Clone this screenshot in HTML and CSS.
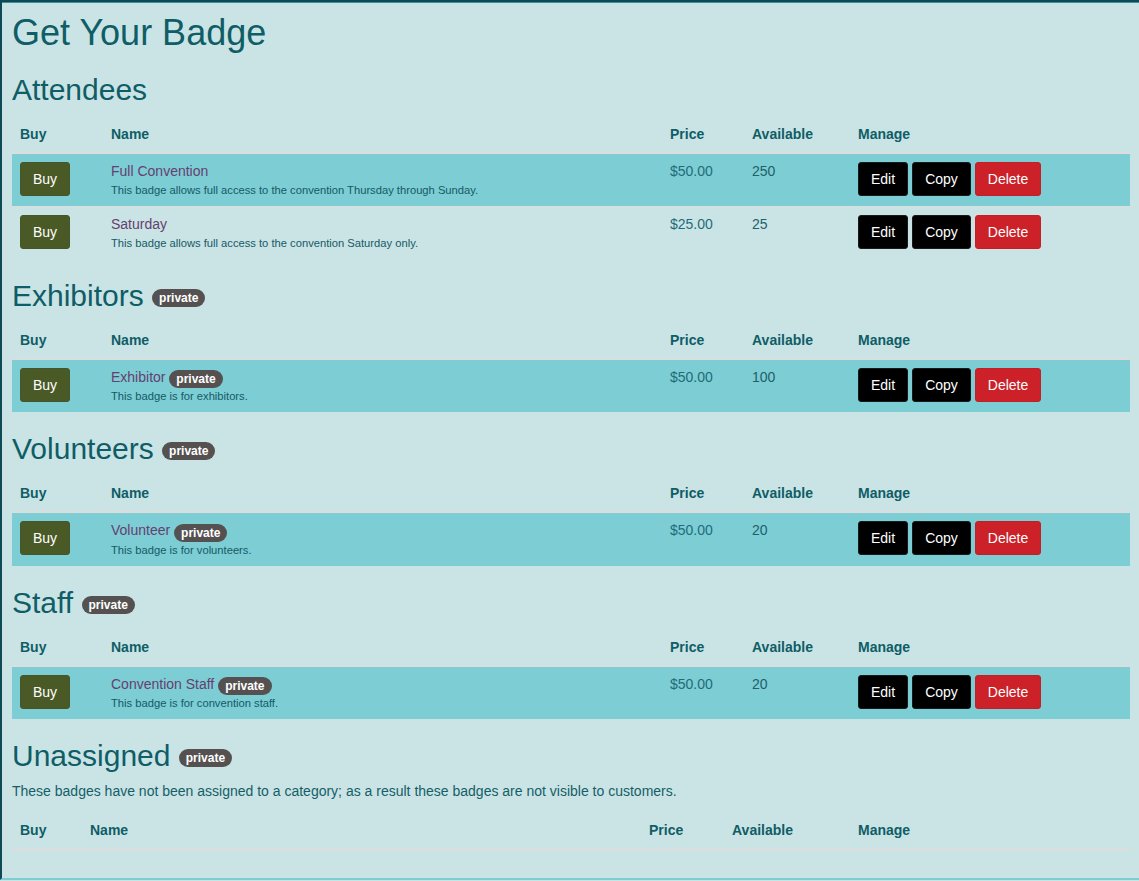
FILE: index.html
```html
<!DOCTYPE html>
<html lang="en">
<head>
    <meta charset="UTF-8">
    <title>Get Your Badge</title>
    <link rel="stylesheet" href="styles.css">
</head>
<body>
<div class="page">
    <h1>Get Your Badge</h1>

    <h2>Attendees</h2>
    <table class="badges">
        <colgroup>
            <col class="c-buy"><col class="c-name"><col class="c-price"><col class="c-avail"><col class="c-manage">
        </colgroup>
        <thead>
            <tr><th>Buy</th><th>Name</th><th>Price</th><th>Available</th><th>Manage</th></tr>
        </thead>
        <tbody>
            <tr class="odd">
                <td><button class="btn btn-buy">Buy</button></td>
                <td>
                    <span class="badge-name">Full Convention</span>
                    <div class="desc">This badge allows full access to the convention Thursday through Sunday.</div>
                </td>
                <td class="price">$50.00</td>
                <td class="avail">250</td>
                <td><div class="manage"><button class="btn btn-dark">Edit</button><button class="btn btn-dark">Copy</button><button class="btn btn-danger">Delete</button></div></td>
            </tr>
            <tr>
                <td><button class="btn btn-buy">Buy</button></td>
                <td>
                    <span class="badge-name">Saturday</span>
                    <div class="desc">This badge allows full access to the convention Saturday only.</div>
                </td>
                <td class="price">$25.00</td>
                <td class="avail">25</td>
                <td><div class="manage"><button class="btn btn-dark">Edit</button><button class="btn btn-dark">Copy</button><button class="btn btn-danger">Delete</button></div></td>
            </tr>
        </tbody>
    </table>

    <h2>Exhibitors <span class="pill">private</span></h2>
    <table class="badges">
        <colgroup>
            <col class="c-buy"><col class="c-name"><col class="c-price"><col class="c-avail"><col class="c-manage">
        </colgroup>
        <thead>
            <tr><th>Buy</th><th>Name</th><th>Price</th><th>Available</th><th>Manage</th></tr>
        </thead>
        <tbody>
            <tr class="odd">
                <td><button class="btn btn-buy">Buy</button></td>
                <td>
                    <span class="badge-name">Exhibitor</span> <span class="pill">private</span>
                    <div class="desc">This badge is for exhibitors.</div>
                </td>
                <td class="price">$50.00</td>
                <td class="avail">100</td>
                <td><div class="manage"><button class="btn btn-dark">Edit</button><button class="btn btn-dark">Copy</button><button class="btn btn-danger">Delete</button></div></td>
            </tr>
        </tbody>
    </table>

    <h2>Volunteers <span class="pill">private</span></h2>
    <table class="badges">
        <colgroup>
            <col class="c-buy"><col class="c-name"><col class="c-price"><col class="c-avail"><col class="c-manage">
        </colgroup>
        <thead>
            <tr><th>Buy</th><th>Name</th><th>Price</th><th>Available</th><th>Manage</th></tr>
        </thead>
        <tbody>
            <tr class="odd">
                <td><button class="btn btn-buy">Buy</button></td>
                <td>
                    <span class="badge-name">Volunteer</span> <span class="pill">private</span>
                    <div class="desc">This badge is for volunteers.</div>
                </td>
                <td class="price">$50.00</td>
                <td class="avail">20</td>
                <td><div class="manage"><button class="btn btn-dark">Edit</button><button class="btn btn-dark">Copy</button><button class="btn btn-danger">Delete</button></div></td>
            </tr>
        </tbody>
    </table>

    <h2>Staff <span class="pill">private</span></h2>
    <table class="badges">
        <colgroup>
            <col class="c-buy"><col class="c-name"><col class="c-price"><col class="c-avail"><col class="c-manage">
        </colgroup>
        <thead>
            <tr><th>Buy</th><th>Name</th><th>Price</th><th>Available</th><th>Manage</th></tr>
        </thead>
        <tbody>
            <tr class="odd">
                <td><button class="btn btn-buy">Buy</button></td>
                <td>
                    <span class="badge-name">Convention Staff</span> <span class="pill">private</span>
                    <div class="desc">This badge is for convention staff.</div>
                </td>
                <td class="price">$50.00</td>
                <td class="avail">20</td>
                <td><div class="manage"><button class="btn btn-dark">Edit</button><button class="btn btn-dark">Copy</button><button class="btn btn-danger">Delete</button></div></td>
            </tr>
        </tbody>
    </table>

    <h2>Unassigned <span class="pill">private</span></h2>
    <p class="intro">These badges have not been assigned to a category; as a result these badges are not visible to customers.</p>
    <table class="badges empty">
        <colgroup>
            <col class="c-buy"><col class="c-name"><col class="c-price"><col class="c-avail"><col class="c-manage">
        </colgroup>
        <thead>
            <tr><th>Buy</th><th>Name</th><th>Price</th><th>Available</th><th>Manage</th></tr>
        </thead>
        <tbody></tbody>
    </table>
</div>
</body>
</html>
```

FILE: styles.css
```css
html, body {
    margin: 0;
    padding: 0;
    font-family: "Liberation Sans", Arial, sans-serif;
    font-size: 14px;
    line-height: 1.42857;
    background-color: #cae4e5;
    color: #155e68;
}
.page {
    border-top: 2px solid #0e4a55;
    border-left: 2px solid #0e4a55;
    border-bottom: 2px solid #7ccdd4;
    box-shadow: inset 0 1px 0 #3b8f99;
    padding: 1px 9px 8px 10px;
}
h1 {
    font-size: 36px;
    font-weight: normal;
    line-height: 1.1;
    color: #0f5d66;
    margin: 10px 0 10px;
}
h2 {
    font-size: 30px;
    font-weight: normal;
    line-height: 1.1;
    color: #0f5d66;
    margin: 20px 0 10px;
}
.intro {
    margin: 0 0 10px;
}

/* badge tables */
.badges {
    width: 100%;
    border-collapse: collapse;
    border-spacing: 0;
    table-layout: fixed;
    margin-bottom: 20px;
}
.badges th,
.badges td {
    padding: 8px;
    text-align: left;
    vertical-align: top;
}
.badges th {
    padding: 9px 8px 7px;
    font-weight: bold;
    color: #0f5d66;
    border-bottom: 2px solid #dddddd;
}
.badges td {
    border-top: 1px solid #dddddd;
}
.badges tr.odd td {
    background-color: #7ccdd4;
}
.c-buy { width: 91px; }
.c-name { width: 559px; }
.c-price { width: 82px; }
.c-avail { width: 106px; }
.c-manage { width: 280px; }
.empty .c-buy { width: 70px; }
.empty .c-price { width: 83px; }
.empty .c-avail { width: 126px; }

.badge-name {
    color: #663f70;
}
.desc {
    font-size: 80%;
    line-height: 16px;
    color: #155a66;
}
.price {
    color: #1f6c78;
}
.avail {
    color: #21606a;
}

/* buttons */
.btn {
    display: inline-block;
    font-family: inherit;
    font-size: 14px;
    line-height: 20px;
    padding: 6px 12px;
    border: 1px solid transparent;
    border-radius: 3px;
    color: #ffffff;
    cursor: pointer;
    margin: 0;
}
.btn-buy {
    background-color: #4a5a27;
    border-color: #46552a;
}
.btn-dark {
    background-color: #000000;
    border-color: #1a1a1a;
}
.btn-danger {
    background-color: #cc2128;
    border-color: #c41f26;
}
.manage {
    display: flex;
    gap: 4px;
}

/* private label */
.pill {
    display: inline-block;
    padding: 3px 7px;
    font-size: 12px;
    font-weight: bold;
    line-height: 1;
    color: #ffffff;
    background-color: #555151;
    border-radius: 10px;
    white-space: nowrap;
}
h2 .pill {
    vertical-align: 4px;
}
.badges td .pill {
    vertical-align: -1.5px;
}
```
